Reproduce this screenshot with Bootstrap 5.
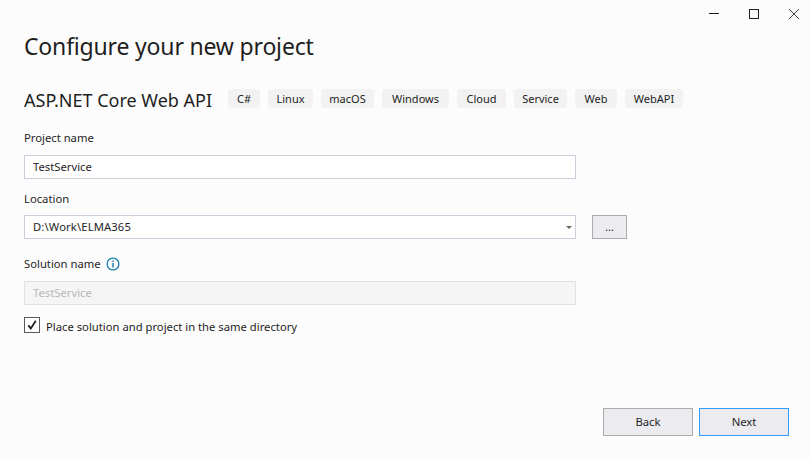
<!DOCTYPE html>
<html lang="en">
<head>
<meta charset="utf-8">
<title>Configure your new project</title>
<link rel="stylesheet" href="https://cdn.jsdelivr.net/npm/bootstrap@5.3.0/dist/css/bootstrap.min.css">
<style>
html,body{height:100%;overflow:hidden}
body{background:#fcfcfc;color:#1e1e1e;font-family:"Noto Sans","Open Sans",sans-serif;font-size:11.25px;line-height:16px}
.shell{height:460px;position:relative}
.winbar{height:30px;margin-right:-4px}
.winbtn{width:40px;height:28px;display:flex;align-items:center;justify-content:center;background:none;border:0;padding:0}
.winbar svg{display:block}
.pagehead{font-size:23px;line-height:32px;font-weight:400;margin:0;color:#1e1e1e;letter-spacing:-.18px}
.subhead{font-size:18px;line-height:24px;font-weight:400;margin:0;color:#1e1e1e;width:204px;white-space:nowrap}
.tagrow{margin-top:26px;height:24px}
.chip{background:#f2f2f2;border-radius:4px;height:19px;line-height:19px;text-align:center;font-size:11px;color:#1e1e1e;margin-top:1px}
.fieldlabel{display:block;font-size:11.25px;line-height:16px;margin:0;color:#1e1e1e;height:16px}
.vsinput{width:552px;height:24px;border:1px solid #cccedb;background:#fff;border-radius:0;padding:0 8px 2px;font-size:11.25px;line-height:20px;color:#1e1e1e;box-shadow:none}
.vsinput[disabled]{background:#f5f5f5;border-color:#e2e2e6;color:#b8b8b8;opacity:1}
.vsselect{padding-right:16px;letter-spacing:.12px}
.caret{position:absolute;right:4px;top:11px;width:0;height:0;border-left:3px solid transparent;border-right:3px solid transparent;border-top:3px solid #666}
.vsbtn{background:#ecebf0;border:1px solid #acacac;border-radius:0;color:#1e1e1e;font-size:11.25px;padding:0;line-height:16px}
.vsbtn:hover{background:#ecebf0;border-color:#acacac;color:#1e1e1e}
.browse{width:35px;height:24px;margin-left:16px}
.action{width:90px;height:28px}
.action-main,.action-main:hover{border-color:#3399ff}
.vscheck{width:16px;height:16px;border:1px solid #5a5a5a;background:#fff;display:flex;align-items:center;justify-content:center}
.infoicon{margin-left:5px}
.footbar{position:absolute;right:21px;top:408px;gap:6px}
.sect-a{margin-top:18px}
.sect-b{margin-top:12px}
.sect-c{margin-top:17px}
.sect-d{margin-top:12px;gap:6px}
.fieldbox{margin-top:9px}
.fieldbox-tight{margin-top:8px}
.checktext{position:relative;top:2px}
</style>
</head>
<body>
<div class="shell">
  <div class="winbar d-flex justify-content-end">
    <div class="winbtn"><svg width="12" height="12" viewBox="0 0 12 12"><path d="M1 5.5h10" stroke="#1e1e1e" stroke-width="1"/></svg></div>
    <div class="winbtn"><svg width="12" height="12" viewBox="0 0 12 12"><rect x="1.5" y="1.5" width="9" height="9" fill="none" stroke="#1e1e1e"/></svg></div>
    <div class="winbtn"><svg width="12" height="12" viewBox="0 0 12 12"><path d="M1 1l10 10M11 1L1 11" stroke="#444" stroke-width="1" fill="none"/></svg></div>
  </div>
  <div class="px-4">
    <h1 class="pagehead">Configure your new project</h1>
    <div class="tagrow d-flex align-items-start">
      <h2 class="subhead">ASP.NET Core Web API</h2>
      <div class="d-flex gap-2">
        <span class="chip" style="width:32px">C#</span>
        <span class="chip" style="width:45px">Linux</span>
        <span class="chip" style="width:53px">macOS</span>
        <span class="chip" style="width:67px">Windows</span>
        <span class="chip" style="width:49px">Cloud</span>
        <span class="chip" style="width:53px">Service</span>
        <span class="chip" style="width:42px">Web</span>
        <span class="chip" style="width:58px">WebAPI</span>
      </div>
    </div>
    <div class="sect-a">
      <label class="fieldlabel" for="pn">Project name</label>
      <div class="fieldbox"><input id="pn" class="form-control vsinput" value="TestService"></div>
    </div>
    <div class="sect-b">
      <label class="fieldlabel" for="loc">Location</label>
      <div class="d-flex fieldbox-tight">
        <div class="position-relative">
          <input id="loc" class="form-control vsinput vsselect" value="D:\Work\ELMA365">
          <span class="caret"></span>
        </div>
        <button type="button" class="btn vsbtn browse">...</button>
      </div>
    </div>
    <div class="sect-c">
      <div class="d-flex align-items-center fieldlabel">
        <span>Solution name</span>
        <svg class="infoicon" width="14" height="14" viewBox="0 0 14 14"><circle cx="7" cy="7" r="5.9" fill="#fff" stroke="#1b7fb0" stroke-width="1.3"/><rect x="6.3" y="6" width="1.5" height="4.5" fill="#1b7fb0"/><rect x="6.3" y="3.4" width="1.5" height="1.5" fill="#1b7fb0"/></svg>
      </div>
      <div class="fieldbox"><input class="form-control vsinput" value="TestService" disabled></div>
    </div>
    <div class="sect-d d-flex align-items-center">
      <span class="vscheck"><svg width="12" height="12" viewBox="0 0 12 12"><path d="M2.3 6.4l2.5 3L9.8 1.8" fill="none" stroke="#1e1e1e" stroke-width="1.8"/></svg></span>
      <span class="checktext">Place solution and project in the same directory</span>
    </div>
  </div>
  <div class="footbar d-flex">
    <button type="button" class="btn vsbtn action">Back</button>
    <button type="button" class="btn vsbtn action action-main">Next</button>
  </div>
</div>
<script src="https://cdn.jsdelivr.net/npm/bootstrap@5.3.0/dist/js/bootstrap.bundle.min.js"></script>
</body>
</html>
